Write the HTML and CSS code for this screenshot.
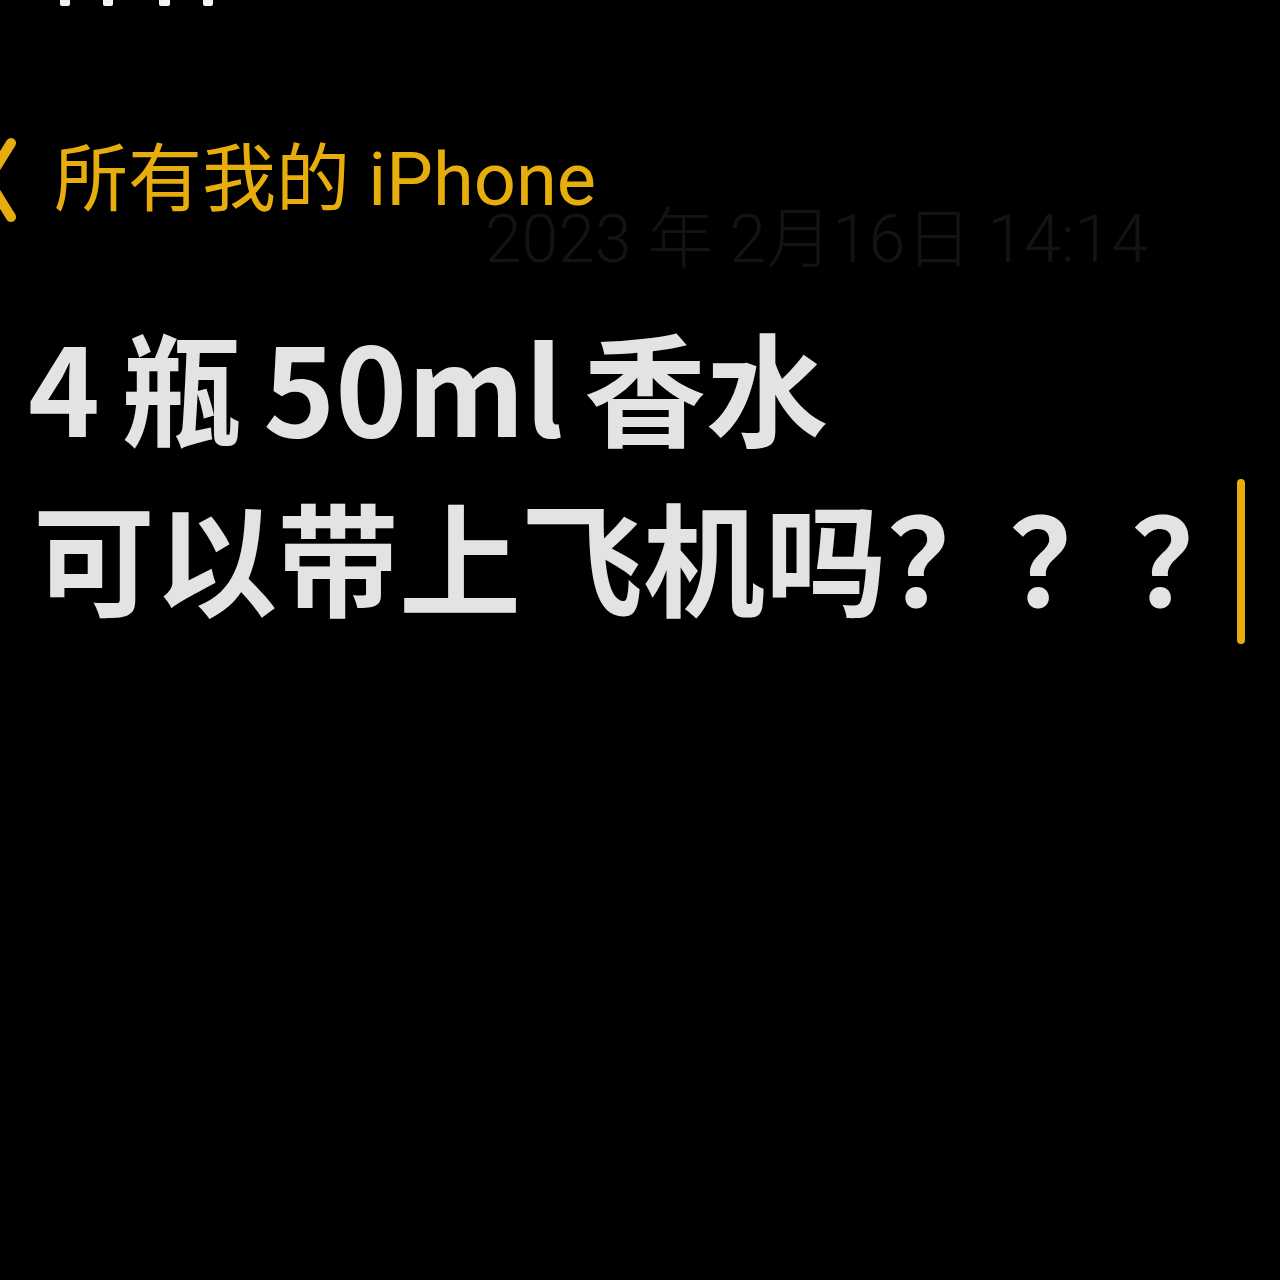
FILE: index.html
```html
<!DOCTYPE html>
<html lang="zh-CN">
<head>
<meta charset="utf-8">
<link rel="stylesheet" href="styles.css">
</head>
<body>
<div class="screen">
  <div class="status">
    <span class="tick t1"></span>
    <span class="tick t2"></span>
    <span class="tick t3"></span>
    <span class="tick t4"></span>
  </div>
  <div class="nav">
    <svg class="chev" viewBox="0 0 16 84" width="16" height="84">
      <path d="M11 5 L-12 42 L11 79" fill="none" stroke="#e6ad0c" stroke-width="10" stroke-linecap="round" stroke-linejoin="round"/>
    </svg>
    <span class="back">所有我的 iPhone</span>
  </div>
  <div class="date">2023 年 2月16日 14:14</div>
  <div class="note">
    <div class="line l1">4 瓶 50ml 香水</div>
    <div class="line l2">可以带上飞机吗？？？<span class="caret"></span></div>
  </div>
</div>
</body>
</html>
```
FILE: styles.css
```css
html, body {
  margin: 0;
  padding: 0;
  background: #000;
}
.screen {
  width: 1280px;
  height: 1280px;
  background: #000;
  overflow: hidden;
  font-family: "Noto Sans CJK SC", "Noto Sans", sans-serif;
}
.status {
  display: flex;
  height: 6px;
  padding-left: 60px;
}
.tick {
  display: block;
  width: 10px;
  height: 6px;
  background: #f2f2f2;
  border-radius: 0 0 2px 2px;
}
.t2 { margin-left: 33px; }
.t3 { margin-left: 46px; width: 11px; }
.t4 { margin-left: 33px; }
.nav {
  display: flex;
  align-items: center;
  margin-top: 132px;
  height: 84px;
}
.chev {
  display: block;
  flex: none;
  overflow: visible;
}
.back {
  margin-left: 38px;
  margin-top: 0;
  font-family: "Roboto", "Noto Sans CJK SC", sans-serif;
  font-size: 74px;
  font-weight: 400;
  color: #e6ad0c;
  line-height: 84px;
}
.date {
  margin-top: -10px;
  padding-left: 485px;
  font-family: "Roboto", "Noto Sans CJK SC", sans-serif;
  font-size: 66px;
  font-weight: 300;
  color: #131313;
  line-height: 56px;
  height: 56px;
}
.note {
  margin-top: 31px;
  color: #e3e3e3;
  font-weight: 700;
  font-size: 122px;
  text-spacing-trim: space-all;
}
.line {
  height: 170px;
  line-height: 170px;
  white-space: nowrap;
}
.l1 {
  padding-left: 28px;
  word-spacing: -7px;
}
.l2 {
  padding-left: 33px;
  display: flex;
  align-items: center;
}
.caret {
  display: block;
  flex: none;
  align-self: flex-start;
  width: 8px;
  height: 165px;
  background: #e6ad0c;
  border-radius: 4px;
  margin-left: -16px;
  margin-top: 10px;
}
```
